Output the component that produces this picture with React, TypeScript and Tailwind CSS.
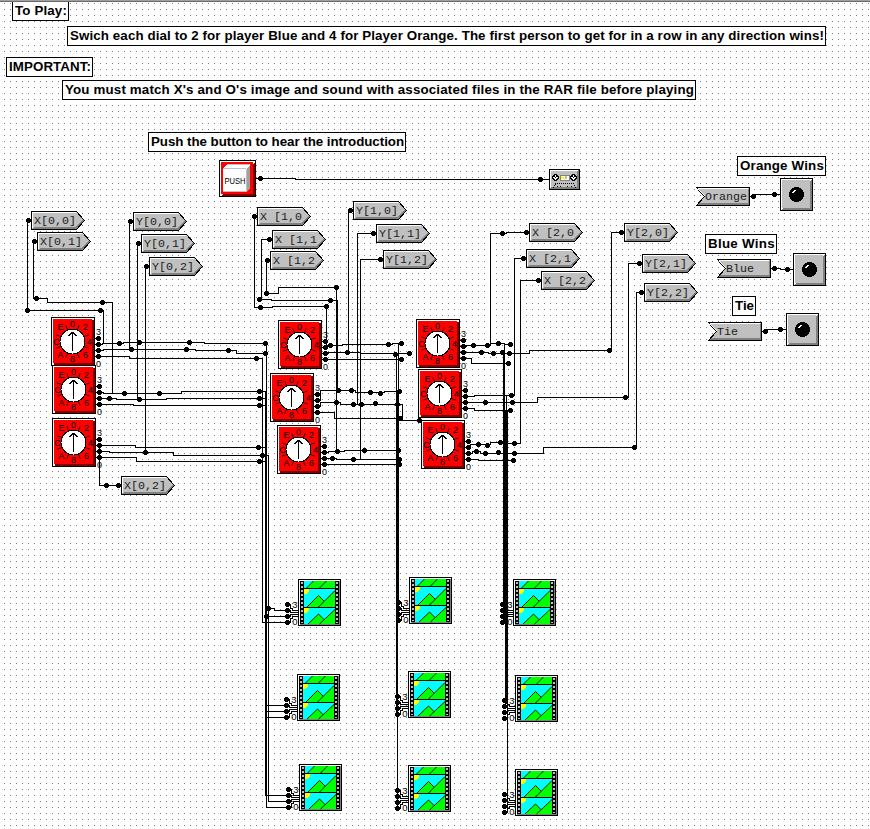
import { useLayoutEffect, useRef } from "react";

type Pt = [number, number];

const WIRES: Pt[][] = [
  [[256, 178], [295, 178], [295, 179], [549, 179]],
  // variables of column 0
  [[31, 220], [27, 220], [27, 310], [103, 310], [103, 343]],
  [[37, 241], [33, 241], [33, 298], [47, 298], [47, 302], [112, 302], [112, 393]],
  [[133, 221], [129, 221], [129, 349]],
  [[141, 243], [137, 243], [137, 399]],
  [[149, 266], [145, 266], [145, 452]],
  [[99, 445], [99, 485], [121, 485]],
  // dials of column 0
  [[95, 344], [102, 344], [102, 343], [123, 343], [123, 342], [204, 342], [204, 343], [266, 343]],
  [[95, 350], [103, 350], [103, 349], [195, 349], [195, 350], [236, 350], [236, 353], [266, 353]],
  [[95, 356], [129, 356], [129, 358], [262, 358], [262, 622], [287, 622]],
  [[96, 392], [103, 392], [103, 393], [181, 393], [181, 391], [265, 391]],
  [[96, 398], [116, 398], [116, 399], [166, 399], [166, 398], [265, 398]],
  [[96, 404], [133, 404], [133, 405], [265, 405]],
  [[96, 445], [135, 445], [135, 447], [265, 447]],
  [[96, 451], [109, 451], [109, 452], [173, 452], [173, 455], [268, 455]],
  [[96, 457], [136, 457], [136, 461], [265, 461]],
  [[266, 343], [266, 807], [288, 807]],
  [[265, 391], [265, 795], [288, 795]],
  [[268, 455], [268, 801], [288, 801]],
  [[268, 608], [274, 608], [274, 610], [287, 610]],
  [[266, 616], [287, 616]],
  [[266, 705], [286, 705]],
  [[266, 711], [286, 711]],
  [[266, 717], [286, 717]],
  // variables of column 1
  [[257, 216], [254, 216], [254, 307], [272, 307], [272, 306], [326, 306], [326, 345]],
  [[272, 239], [261, 239], [261, 299], [271, 299], [271, 300], [337, 300], [337, 391]],
  [[270, 260], [266, 260], [266, 293], [278, 293], [278, 287], [336, 287], [336, 451]],
  [[353, 210], [348, 210], [348, 352]],
  [[376, 233], [357, 233], [357, 404]],
  [[383, 259], [360, 259], [360, 459]],
  // dials of column 1
  [[322, 347], [327, 347], [327, 345], [342, 345], [342, 344], [392, 344], [392, 343], [401, 343]],
  [[322, 353], [328, 353], [328, 352], [360, 352], [360, 353], [409, 353]],
  [[322, 359], [401, 359]],
  [[314, 400], [320, 400], [320, 390], [355, 390], [355, 392], [384, 392], [384, 391], [399, 391]],
  [[314, 406], [320, 406], [320, 402], [340, 402], [340, 404], [402, 404], [402, 420], [419, 420]],
  [[314, 412], [334, 412], [334, 418], [400, 418]],
  [[321, 452], [328, 452], [328, 451], [344, 451], [344, 450], [398, 450]],
  [[321, 458], [336, 458], [336, 459], [399, 459]],
  [[321, 464], [399, 464]],
  [[396, 353], [396, 712]],
  [[398, 343], [398, 620]],
  [[397, 391], [397, 808]],
  // variables of column 2
  [[529, 232], [506, 232], [506, 233], [490, 233], [490, 345]],
  [[526, 258], [514, 258], [514, 395]],
  [[541, 280], [520, 280], [520, 443], [504, 443]],
  [[624, 232], [611, 232], [611, 350], [529, 350], [529, 353], [493, 353], [488, 353], [488, 352], [460, 352]],
  [[642, 263], [628, 263], [628, 397], [537, 397], [537, 402], [462, 402]],
  [[644, 292], [636, 292], [636, 447], [543, 447], [543, 453], [480, 453], [480, 451], [472, 451], [472, 453], [465, 453]],
  // dials of column 2
  [[460, 346], [466, 346], [466, 345], [490, 345], [490, 343], [504, 343], [504, 344], [510, 344]],
  [[460, 358], [471, 358], [471, 363], [508, 363]],
  [[462, 396], [474, 396], [474, 395], [514, 395]],
  [[462, 408], [474, 408], [474, 410], [510, 410]],
  [[465, 447], [470, 447], [470, 444], [490, 444], [490, 442], [504, 442], [504, 443]],
  [[465, 459], [478, 459], [478, 460], [513, 460]],
  [[504, 344], [504, 620]],
  [[503, 352], [503, 620]],
  [[506, 395], [506, 703]],
  [[505, 410], [505, 703]],
  [[507, 410], [507, 808]],
  // result lamps
  [[750, 196], [755, 196], [755, 194], [780, 194]],
  [[771, 268], [780, 268], [780, 269], [793, 269]],
  [[762, 331], [766, 331], [766, 329], [786, 329]],
];

const JOINTS: Pt[] = [
  [260, 178], [540, 179],
  [27, 310], [100, 310], [36, 298], [102, 302], [131, 349], [139, 399], [145, 452], [106, 485],
  [119, 343], [139, 342], [189, 342], [265, 343], [186, 349], [228, 350], [265, 353], [256, 358],
  [124, 393], [159, 393], [259, 391], [109, 398], [259, 398], [259, 405], [258, 447], [262, 455], [259, 461],
  [268, 608], [266, 616],
  [260, 307], [326, 306], [259, 299], [330, 300], [266, 293], [336, 287],
  [330, 345], [388, 344], [401, 343], [347, 352], [395, 354], [409, 353], [401, 359],
  [338, 390], [351, 390], [370, 392], [380, 393], [399, 391], [336, 402], [353, 404], [361, 404], [375, 403], [397, 404],
  [400, 418], [419, 420], [337, 451], [364, 450], [398, 450], [332, 458], [353, 459], [399, 459], [399, 464],
  [502, 233], [473, 345], [487, 345], [498, 343], [510, 344], [481, 352], [493, 353], [502, 352], [509, 353], [609, 350],
  [508, 363], [511, 395], [485, 402], [512, 402], [625, 397], [510, 410],
  [478, 444], [487, 445], [500, 442], [514, 443], [476, 451], [485, 453], [498, 452], [514, 453], [634, 447], [513, 460],
  [753, 196], [774, 194], [774, 268], [787, 269], [765, 331], [780, 329],
];

const DIALS: Pt[] = [
  [51, 317], [52, 365], [52, 418],
  [278, 320], [270, 373], [277, 425],
  [416, 319], [418, 369], [421, 420],
];

const FILMS: Pt[] = [
  [298, 579], [409, 577], [513, 579],
  [297, 674], [408, 671], [515, 675],
  [299, 764], [408, 765], [515, 769],
];

const TAGS: [number, number, string][] = [
  [31, 211, "X[0,0]"], [37, 232, "X[0,1]"], [121, 476, "X[0,2]"],
  [133, 212, "Y[0,0]"], [141, 234, "Y[0,1]"], [149, 257, "Y[0,2]"],
  [257, 207, "X [1,0"], [272, 230, "X [1,1"], [270, 251, "X [1,2"],
  [353, 201, "Y[1,0]"], [376, 224, "Y[1,1]"], [383, 250, "Y[1,2]"],
  [529, 223, "X [2,0"], [526, 249, "X [2,1"], [541, 271, "X [2,2"],
  [624, 223, "Y[2,0]"], [642, 254, "Y[2,1]"], [644, 283, "Y[2,2]"],
];

const INPUTS: [number, number, string][] = [
  [696, 187, "Orange"], [717, 259, "Blue"], [708, 322, "Tie"],
];

const LAMPS: Pt[] = [[780, 178], [793, 253], [786, 313]];

const NOTES: [number, number, number, string][] = [
  [12, 1, 57, "To Play:"],
  [67, 26, 759, "Swich each dial to 2 for player Blue and 4 for Player Orange. The first person to get for in a row in any direction wins!"],
  [6, 57, 87, "IMPORTANT:"],
  [62, 80, 634, "You must match X's and O's image and sound with associated files in the RAR file before playing"],
  [148, 132, 258, "Push the button to hear the introduction"],
  [737, 156, 89, "Orange Wins"],
  [705, 234, 72, "Blue Wins"],
  [732, 296, 24, "Tie"],
];

function Joint({ at: [x, y] }: { at: Pt }) {
  return <path d={`M${x - 1} ${y - 2}h3v1h1v3h-1v1h-3v-1h-1v-3h1z`} />;
}

// Spreads the letters so that the caption fills the width of its frame.
function Note({ x, y, w, text }: { x: number; y: number; w: number; text: string }) {
  const ref = useRef<HTMLSpanElement>(null);
  useLayoutEffect(() => {
    const el = ref.current;
    if (!el) return;
    el.style.letterSpacing = "0px";
    const natural = el.getBoundingClientRect().width;
    el.style.letterSpacing = `${(w - 5 - natural) / text.length}px`;
  }, [w, text]);
  return (
    <div
      className="absolute flex h-5 items-center whitespace-pre border border-black bg-white pl-[2px] font-['Liberation_Sans',Arial,sans-serif] text-[13.33px] font-bold leading-none text-black"
      style={{ left: x, top: y, width: w }}
    >
      <span ref={ref}>{text}</span>
    </div>
  );
}

function Tag({ x, y, text }: { x: number; y: number; text: string }) {
  return (
    <div className="absolute flex h-[19px] w-[54px] items-center" style={{ left: x, top: y }}>
      <svg className="absolute inset-0" width="54" height="19" shapeRendering="crispEdges">
        <path d="M.5 .5H45.5L53.5 9.5L45.5 18.5H.5Z" fill="#c0c0c0" stroke="#000" />
        <path d="M1.5 17V1.5H45" fill="none" stroke="#fff" />
        <path d="M2 17.5H45.5L52.5 9.5" fill="none" stroke="#808080" />
        <path d="M.5 .5H45.5L53.5 9.5L45.5 18.5H.5Z" fill="none" stroke="#000" />
        <path d="M3 16.5H45L51.5 9.5" fill="none" stroke="#808080" />
      </svg>
      <span className="relative whitespace-pre pl-[3px] pt-[3px] font-['Liberation_Mono',monospace] text-[11.67px] leading-none text-[#202020]">{text}</span>
    </div>
  );
}

function InputTag({ x, y, text }: { x: number; y: number; text: string }) {
  return (
    <div className="absolute flex h-[19px] w-[54px] items-center" style={{ left: x, top: y }}>
      <svg className="absolute inset-0" width="54" height="19" shapeRendering="crispEdges">
        <path d="M.5 .5H53.5V18.5H.5L8.5 9.5Z" fill="#c0c0c0" stroke="#000" />
        <path d="M2 1.5H52M2 2L9.5 9.5" fill="none" stroke="#fff" />
        <path d="M2 17.5H52.5V2M3 16.5H52" fill="none" stroke="#808080" />
      </svg>
      <span className="relative whitespace-pre pl-[9px] pt-[3px] font-['Liberation_Mono',monospace] text-[11.67px] leading-none text-[#202020]">{text}</span>
    </div>
  );
}

const MARKS: [number, number, string][] = [
  [21, 9.5, "0"], [34, 12.5, "2"], [38, 28, "4"], [34, 41, "6"],
  [21, 45, "8"], [9, 41, "A"], [5, 28, "C"], [9, 12.5, "E"],
];

function Dial({ at: [x, y] }: { at: Pt }) {
  return (
    <svg className="absolute" style={{ left: x, top: y }} width="54" height="56">
      <g shapeRendering="crispEdges">
        <rect width="44" height="49" fill="#000" />
        <rect x="1" y="1" width="42" height="47" fill="#fff" />
        <rect x="3" y="3" width="40" height="45" fill="#800000" />
        <rect x="2" y="2" width="39" height="44" fill="#f00" />
      </g>
      <g stroke="#000" strokeWidth=".9">
        {[22.5, 67.5, 112.5, 157.5, 202.5, 247.5, 292.5, 337.5].map((a) => (
          <path key={a} d="M21.5 10.5V7" transform={`rotate(${a} 21.5 24.5)`} />
        ))}
      </g>
      <g shapeRendering="crispEdges">
        <circle cx="21.5" cy="24.5" r="12.5" fill="#fff" stroke="#000" />
        <path d="M21.5 34V15M21.5 15L17.5 19M21.5 15L25.5 19" stroke="#000" fill="none" />
        {[21, 27, 33, 39].map((py) => (
          <g key={py}>
            <rect x="44" y={py} width="3" height="1" />
            <Joint at={[47, py]} />
          </g>
        ))}
      </g>
      <g className="font-['Liberation_Sans',sans-serif] text-[9px]" textAnchor="middle">
        {MARKS.map(([mx, my, t]) => (
          <text key={t} x={mx + 0.5} y={my}>{t}</text>
        ))}
        <text x="47.5" y="18">3</text>
        <text x="47.5" y="49.5">0</text>
      </g>
    </svg>
  );
}

function Film({ at: [x, y] }: { at: Pt }) {
  return (
    <svg className="absolute overflow-visible" style={{ left: x, top: y }} width="43" height="47">
      <g shapeRendering="crispEdges">
        <rect width="43" height="47" fill="#000" />
        <rect x="1" y="1" width="41" height="45" fill="#808080" />
        <path d="M1 46V1H42V2H2V45Z" fill="#fff" />
        <rect x="2" y="2" width="39" height="43" fill="#000" />
        <rect x="6" y="2" width="31" height="43" fill="#0ff" />
        {[3, 7, 11, 15, 19, 23, 27, 31, 35, 39, 43].map((py) => (
          <g key={py} fill="#c0c0c0">
            <rect x="3" y={py} width="2" height={py > 42 ? 1 : 2} />
            <rect x="38" y={py} width="2" height={py > 42 ? 1 : 2} />
          </g>
        ))}
        <path d="M8 9L15 2H37V9Z" fill="#0f0" />
        <path d="M9 28L20.5 16L26 22L37 12V28ZM10 45L20.5 35L26 41L37 31V45Z" fill="#0f0" />
      </g>
      <path
        d="M8.5 9L15.5 2M21.5 9L28.5 2M9 28L20.5 16.5L26 22M20.5 28L37 11.5M10 45L20.5 35L26 40.5M21.5 45L37 30.5"
        fill="none"
        stroke="#000"
        strokeWidth=".9"
      />
      <g shapeRendering="crispEdges">
        <path d="M6 10H11V13H10V14H9V15H6ZM6 29H11V32H10V33H9V34H6Z" fill="#ff0" />
        <path d="M6 9.5H37M6 28.5H37" stroke="#000" />
        <g fill="none" stroke="#000" transform="translate(.5 .5)">
          <path d="M-11 25H-8V29H-6V31H0M-11 31H-8V33H0M-11 37H-8V35H0M-11 43H-8V39H-6V37H0" />
        </g>
        {[25, 31, 37, 43].map((py) => <Joint key={py} at={[-11, py]} />)}
      </g>
      <g className="font-['Liberation_Sans',sans-serif] text-[9.5px]" textAnchor="middle">
        <text x="-3.2" y="28.5">3</text>
        <text x="-3.2" y="46">0</text>
      </g>
    </svg>
  );
}

function Lamp({ at: [x, y] }: { at: Pt }) {
  return (
    <svg className="absolute" style={{ left: x, top: y }} width="33" height="33" shapeRendering="crispEdges">
      <rect width="33" height="33" rx="1" fill="#000" />
      <rect x="1" y="1" width="31" height="31" fill="#808080" />
      <path d="M1 32V1H32L30 3H3V30Z" fill="#fff" />
      <rect x="2" y="2" width="28" height="28" fill="#c0c0c0" />
      <circle cx="16.5" cy="16.5" r="7.5" />
      <path d="M12 14h1v-1h1v-1h2v1h-1v1h-1v1h-2z" fill="#fff" />
    </svg>
  );
}

function PushButton() {
  return (
    <svg className="absolute left-[219px] top-[160px]" width="37" height="37">
      <g shapeRendering="crispEdges">
        <rect width="37" height="37" />
        <rect x="1" y="1" width="35" height="35" fill="#fff" />
        <path d="M2 36L36 2V36Z" fill="#800000" />
        <rect x="2" y="2" width="32" height="32" fill="#f00" />
        <path d="M4 32V8L8 4H31V28L27 32Z" fill="#fff" />
        <path d="M31 5V28L27 32V9Z" fill="#a0a0a0" />
        <path d="M4 8.5H27M27.5 9V32M4 31.5H27M8 4.5H30" stroke="#c0c0c0" />
      </g>
      <text x="16" y="23.5" textAnchor="middle" textLength="21" lengthAdjust="spacingAndGlyphs" className="font-['Liberation_Sans',sans-serif] text-[9px]">PUSH</text>
    </svg>
  );
}

function Cassette() {
  return (
    <svg className="absolute left-[549px] top-[169px]" width="31" height="21" shapeRendering="crispEdges">
      <rect width="31" height="21" />
      <rect x="1" y="1" width="29" height="19" fill="#808080" />
      <path d="M1 19V1H29V2H2V19Z" fill="#fff" />
      <rect x="2" y="2" width="26" height="16" fill="#c0c0c0" />
      {[6.5, 24.5].map((cx) => (
        <g key={cx}>
          <circle cx={cx} cy="8.5" r="2.7" fill="#fff" stroke="#000" />
          <path d={`M${cx - 1} 7.5l2 2m0-2l-2 2`} stroke="#000" />
        </g>
      ))}
      <rect x="11" y="6" width="9" height="5" fill="#fff" stroke="#808080" />
      <rect x="12" y="8" width="4" height="2" fill="#ff0" />
      <rect x="16" y="7" width="2" height="3" fill="#c0c0c0" />
      <path d="M4.5 19L7 14.5H24L26.5 19" fill="none" stroke="#000" strokeDasharray="1 1" />
      <path d="M8 17.5h1m2 0h1m6 0h1m3 0h1" stroke="#000" />
    </svg>
  );
}

export default function App() {
  return (
    <div className="relative h-[829px] w-[870px] overflow-hidden bg-white">
      <svg className="absolute inset-0" width="870" height="829" shapeRendering="crispEdges">
        <defs>
          <pattern id="grid" width="6" height="6" patternUnits="userSpaceOnUse">
            <rect x="4" y="3" width="1" height="1" fill="#808080" />
          </pattern>
        </defs>
        <rect width="870" height="829" fill="url(#grid)" />
        <g fill="none" stroke="#000" strokeLinecap="square" transform="translate(.5 .5)">
          {WIRES.map((w, i) => (
            <polyline key={i} points={w.map((p) => p.join(",")).join(" ")} />
          ))}
        </g>
      </svg>
      {DIALS.map((p, i) => <Dial key={i} at={p} />)}
      {FILMS.map((p, i) => <Film key={i} at={p} />)}
      <svg className="absolute inset-0" width="870" height="829" shapeRendering="crispEdges">
        {JOINTS.map((p, i) => <Joint key={i} at={p} />)}
        {TAGS.map(([x, y]) => <Joint key={`${x}-${y}`} at={[x - 3, y + 9]} />)}
      </svg>
      {TAGS.map(([x, y, t]) => <Tag key={t} x={x} y={y} text={t} />)}
      {INPUTS.map(([x, y, t]) => <InputTag key={t} x={x} y={y} text={t} />)}
      {LAMPS.map((p, i) => <Lamp key={i} at={p} />)}
      <PushButton />
      <Cassette />
      {NOTES.map(([x, y, w, t]) => <Note key={t} x={x} y={y} w={w} text={t} />)}
      <div className="absolute inset-x-0 top-0 h-[2px] border-b border-[#696969] bg-[#a0a0a0]" />
    </div>
  );
}
